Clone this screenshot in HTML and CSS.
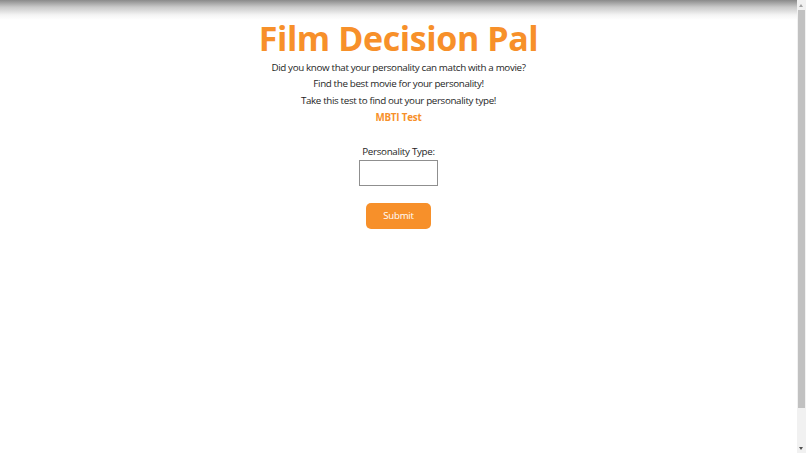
FILE: index.html
```html
<!DOCTYPE html>
<html>
<head>
<meta charset="utf-8">
<link rel="stylesheet" href="styles.css">
</head>
<body>
<div class="page">
  <main class="main">
    <div class="topshade"></div>
    <h1 class="title">Film Decision Pal</h1>
    <p class="line">Did you know that your personality can match with a movie?</p>
    <p class="line">Find the best movie for your personality!</p>
    <p class="line">Take this test to find out your personality type!</p>
    <a class="link" href="#">MBTI Test</a>
    <form class="form">
      <label class="label" for="ptype">Personality Type:</label>
      <input class="field" id="ptype" type="text">
      <button class="btn" type="button">Submit</button>
    </form>
  </main>
  <aside class="scrollbar">
    <div class="arrow up"></div>
    <div class="track"><div class="thumb"></div></div>
    <div class="arrow down"></div>
  </aside>
</div>
</body>
</html>
```
FILE: styles.css
```css
html, body { margin: 0; padding: 0; height: 100%; overflow: hidden; background: #fff; }
.page { display: flex; height: 453px; font-family: "Open Sans", sans-serif; color: #1e1e1e; }
.main { flex: 1; display: flex; flex-direction: column; align-items: center; position: relative; }
.topshade { position: absolute; left: 0; right: 0; top: 0; height: 20px;
  background: linear-gradient(#8a8a8a, #c9c9c9 35%, #f4f4f4 75%, #ffffff); }
.title { margin: 15.5px 0 0; font-size: 34px; line-height: 44px; font-weight: 700; color: #f7902a; letter-spacing: -0.4px; }
.line { margin: 0; font-size: 9.8px; line-height: 16.7px; letter-spacing: -0.35px; }
.link { font-size: 9.8px; line-height: 16.7px; letter-spacing: -0.2px; font-weight: 700; color: #f7902a; text-decoration: none; }
.form { display: flex; flex-direction: column; align-items: center; margin-top: 17px; }
.label { font-size: 9.8px; line-height: 17px; letter-spacing: -0.3px; }
.field { box-sizing: border-box; width: 79px; height: 26px; border: 1px solid #8f8f8f; margin: 0; padding: 0; }
.btn { margin-top: 16.5px; width: 65px; height: 26px; border: none; border-radius: 5px; background: #f7902a; color: #fff; font-family: "Open Sans", sans-serif; font-size: 9.6px; letter-spacing: -0.2px; }
.scrollbar { width: 9px; background: #f1f1f1; display: flex; flex-direction: column; }
.arrow { height: 10px; position: relative; }
.arrow.up::after, .arrow.down::after { content: ""; position: absolute; left: 2px; border-left: 2.5px solid transparent; border-right: 2.5px solid transparent; }
.arrow.up::after { top: 4px; border-bottom: 3px solid #a3a3a3; }
.arrow.down::after { top: 4px; border-top: 3px solid #505050; }
.track { flex: 1; display: flex; flex-direction: column; }
.thumb { margin: 0 1px; height: 398px; background: #c1c1c1; }
```
